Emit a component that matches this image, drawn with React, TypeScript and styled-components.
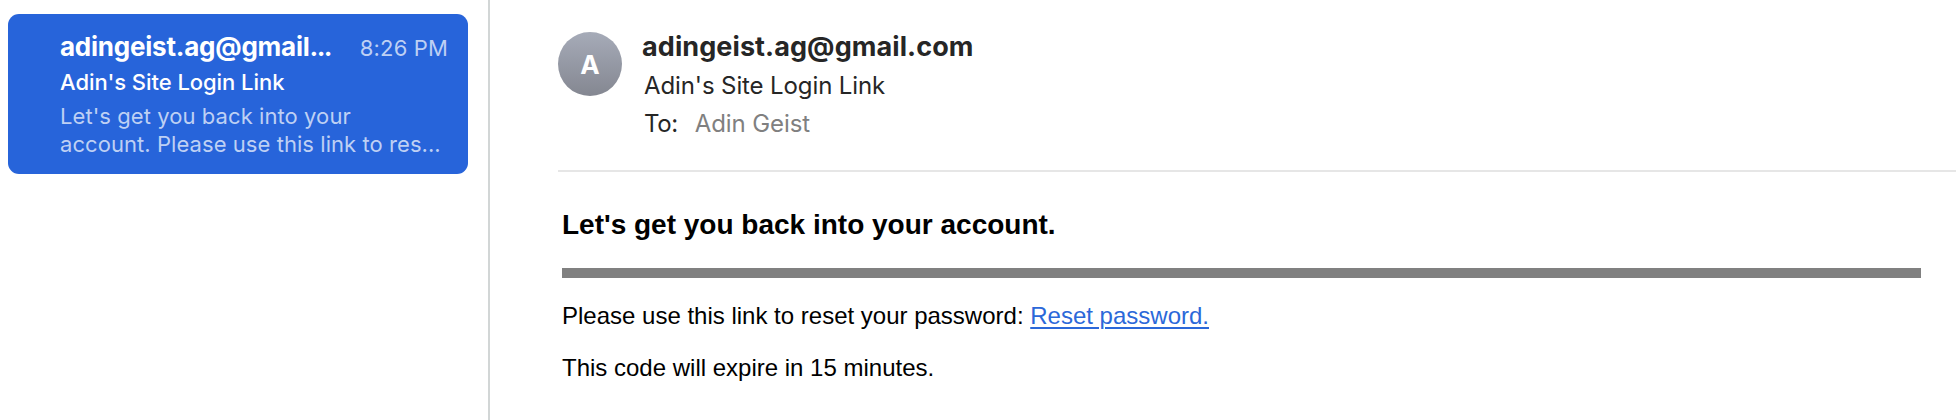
import React from "react";
import styled, { createGlobalStyle } from "styled-components";

const GlobalStyle = createGlobalStyle`
  * { box-sizing: border-box; }
  body { margin: 0; background: #fff; font-family: Inter, "Liberation Sans", sans-serif; }
`;

const Window = styled.div`
  display: flex;
  height: 420px;
  overflow: hidden;
`;

const MessageList = styled.aside`
  flex: none;
  width: 490px;
  padding: 14px 20px 0 8px;
  border-right: 2px solid #d2d6d6;
`;

const MessageCard = styled.article`
  height: 160px;
  padding: 17px 20px 0 52px;
  border-radius: 11px;
  background: #2764da;
  color: #fff;
`;

const CardTop = styled.div`
  display: flex;
  align-items: baseline;
  justify-content: space-between;
  height: 32px;
  line-height: 32px;
`;

const Line = styled.span<{ $size: number; $weight?: number; $spacing?: number; $color?: string }>`
  display: inline-block;
  white-space: nowrap;
  font-size: ${(p) => p.$size}px;
  font-weight: ${(p) => p.$weight ?? 400};
  letter-spacing: ${(p) => p.$spacing ?? 0}px;
  color: ${(p) => p.$color ?? "inherit"};
`;

const Dots = styled.span`
  letter-spacing: -1.6px;
`;

const CardSubject = styled.div`
  line-height: 32px;
  margin-top: 3px;
`;

const CardPreview = styled.div`
  display: flex;
  flex-direction: column;
  margin-top: 2px;
  line-height: 28px;
`;

const Reader = styled.main`
  flex: 1;
  min-width: 0;
  padding-left: 68px;
`;

const Header = styled.header`
  display: flex;
  height: 172px;
  padding-top: 32px;
  border-bottom: 2px solid #e6e6e6;
`;

const Avatar = styled.div`
  display: flex;
  align-items: center;
  justify-content: center;
  flex: none;
  width: 64px;
  height: 64px;
  border-radius: 50%;
  background: linear-gradient(#a6abb8, #848791);
  color: #fff;
  font-size: 26px;
  font-weight: 700;
`;

const HeaderLines = styled.div`
  display: flex;
  flex-direction: column;
  align-items: flex-start;
  margin: -1px 0 0 20px;
  line-height: 32px;
  color: #262626;
`;

const HeaderRow = styled.div<{ $top?: number; $left?: number }>`
  display: flex;
  gap: 17px;
  margin-top: ${(p) => p.$top ?? 0}px;
  margin-left: ${(p) => p.$left ?? 0}px;
`;

const Body = styled.section`
  padding: 37px 35px 0 4px;
  font-family: "Liberation Sans", Arial, sans-serif;
  color: #000;
`;

const Title = styled.h1`
  margin: 0;
  font-size: 28px;
  line-height: 32px;
  font-weight: 700;
`;

const Rule = styled.div`
  height: 10px;
  margin-top: 27px;
  background: #808080;
`;

const Paragraph = styled.p<{ $top: number }>`
  margin: ${(p) => p.$top}px 0 0;
  font-size: 24px;
  line-height: 28px;
`;

const ResetLink = styled.a`
  color: #2b68d9;
  text-decoration: underline;
  text-decoration-thickness: 1.5px;
  text-underline-offset: 3px;
`;

export default function App() {
  return (
    <>
      <GlobalStyle />
      <Window>
        <MessageList>
          <MessageCard>
            <CardTop>
              <Line $size={26} $weight={700} $spacing={-0.23}>
                adingeist.ag@gmail<Dots>...</Dots>
              </Line>
              <Line $size={22} $spacing={0.15} $color="#bed0f4">8:26 PM</Line>
            </CardTop>
            <CardSubject>
              <Line $size={22} $weight={500} $spacing={-0.05}>Adin's Site Login Link</Line>
            </CardSubject>
            <CardPreview>
              <Line $size={22} $spacing={0.07} $color="#bed0f4">Let's get you back into your</Line>
              <Line $size={22} $spacing={0.06} $color="#bed0f4">account. Please use this link to res...</Line>
            </CardPreview>
          </MessageCard>
        </MessageList>
        <Reader>
          <Header>
            <Avatar>A</Avatar>
            <HeaderLines>
              <HeaderRow>
                <Line $size={27} $weight={700} $spacing={0.09}>adingeist.ag@gmail.com</Line>
              </HeaderRow>
              <HeaderRow $top={7} $left={2}>
                <Line $size={24} $spacing={-0.11}>Adin's Site Login Link</Line>
              </HeaderRow>
              <HeaderRow $top={6} $left={2}>
                <Line $size={24} $spacing={-0.4}>To:</Line>
                <Line $size={24} $spacing={-0.1} $color="#808080">Adin Geist</Line>
              </HeaderRow>
            </HeaderLines>
          </Header>
          <Body>
            <Title>Let's get you back into your account.</Title>
            <Rule />
            <Paragraph $top={24}>
              Please use this link to reset your password: <ResetLink>Reset password.</ResetLink>
            </Paragraph>
            <Paragraph $top={24}>This code will expire in 15 minutes.</Paragraph>
          </Body>
        </Reader>
      </Window>
    </>
  );
}
